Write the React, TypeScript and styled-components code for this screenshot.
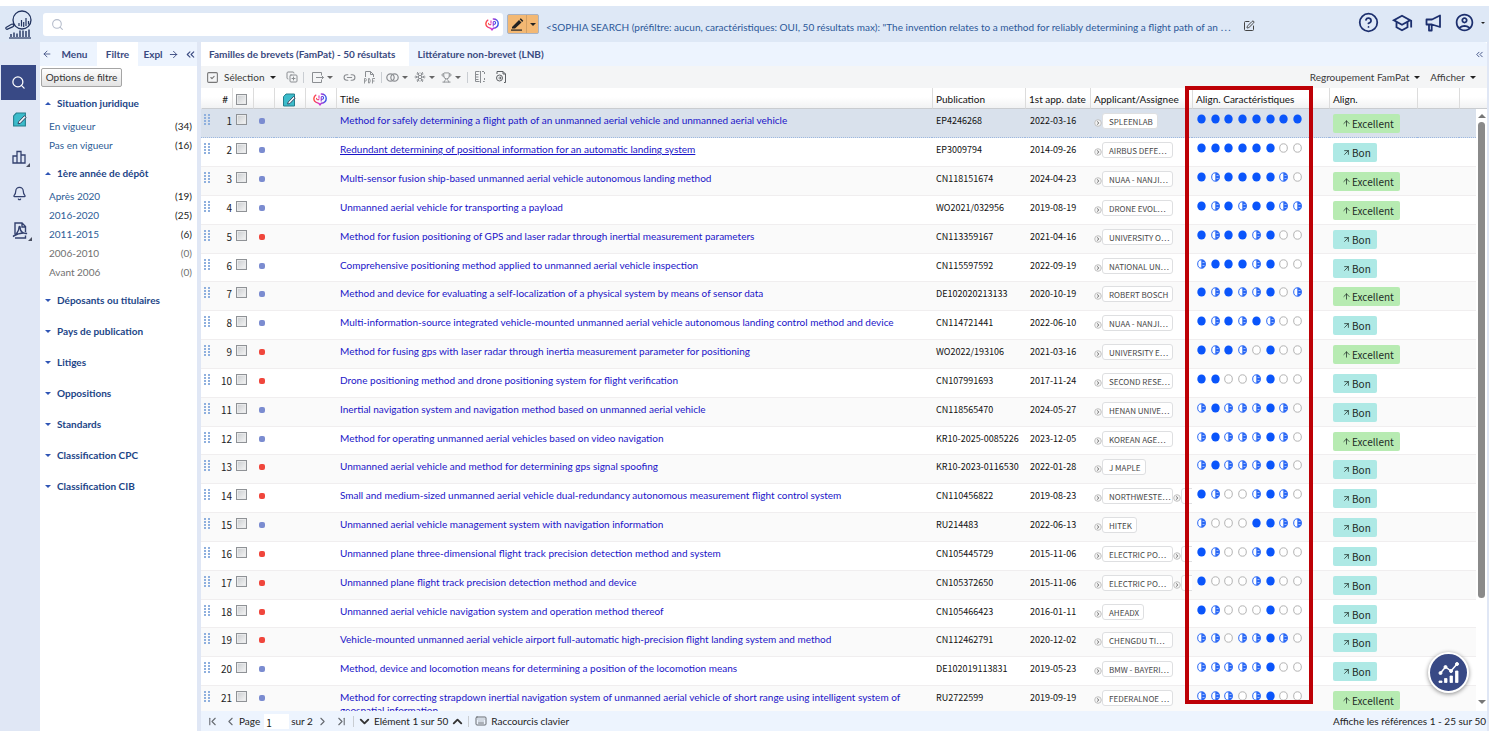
import React from 'react';
import styled, { createGlobalStyle, css } from 'styled-components';
import {
  Search, ArrowLeft, ArrowRight, ArrowUp, ArrowUpRight, ChevronsLeft, Bell, Link2, Trophy, Snowflake,
  SquareCheck, CopyPlus, ChevronLeft, ChevronRight, ChevronFirst, ChevronLast, ChevronDown, ChevronUp,
  Keyboard, SquarePen, CircleHelp,
} from 'lucide-react';
import { MdOutlineSchool, MdOutlineAccountCircle } from 'react-icons/md';

const ui = 'Lato, "Noto Sans CJK SC", sans-serif';
const cjk = '"Noto Sans CJK SC", sans-serif';

const GlobalStyle = createGlobalStyle`
  * { box-sizing: border-box; }
  body { margin: 0; background: #fff; overflow: hidden; font-family: ${ui}; font-size: 10px; line-height: 13px; color: #222; }
  button, input { font: inherit; color: inherit; }
  button { border: 0; padding: 0; background: none; cursor: pointer; }
  a { text-decoration: none; }
  svg { display: block; flex: none; }
`;

const Shell = styled.div`
  height: 100vh;
  padding: 6px 3px 4px 0;
  display: flex;
  flex-direction: column;
`;

/* ---------- top bar ---------- */

const TopBar = styled.header`
  flex: none;
  height: 36px;
  display: flex;
  align-items: center;
  background: #dee8f6;
  padding-right: 4px;
`;
const LogoBox = styled.div`
  width: 43px;
  padding-left: 5px;
`;
const SearchBox = styled.label`
  width: 460px;
  height: 23px;
  background: #fff;
  border-radius: 3px;
  display: flex;
  align-items: center;
  gap: 6px;
  padding: 0 4px 0 8px;
  color: #b5bccb;
`;
const SearchInput = styled.input`
  flex: 1;
  border: 0;
  outline: 0;
  background: none;
`;
const EditGroup = styled.div`
  margin-left: 4px;
  display: flex;
  width: 32px;
  height: 20px;
  border: 1px solid #a9b3c4;
  border-radius: 2px;
  background: #f3b873;
`;
const EditPart = styled.button<{ $w: number; $line?: boolean }>`
  width: ${p => p.$w}px;
  display: flex;
  align-items: center;
  justify-content: center;
  color: #222;
  ${p => p.$line && css`border-left: 1px solid #d3a064;`}
`;
const Query = styled.span`
  margin: 6px 12px 0 7px;
  color: #2c5899;
  line-height: 14px;
  white-space: nowrap;
  overflow: hidden;
  text-overflow: ellipsis;
`;
const IconButton = styled.button<{ $mt?: number }>`
  margin-top: ${p => p.$mt || 0}px;
  display: flex;
  align-items: center;
  gap: 6px;
  color: #444;
`;
const Account = styled.div`
  margin-left: auto;
  display: flex;
  align-items: center;
  gap: 12px;
  padding-bottom: 3px;
  button { color: #1c2f6e; }
`;

/* ---------- frame ---------- */

const Body = styled.div`
  flex: 1;
  min-height: 0;
  display: grid;
  grid-template-columns: 40px 157px minmax(0, 1fr);
  background: #e0e7f5;
  padding-right: 2px;
`;
const Rail = styled.nav`
  padding-top: 23px;
  display: flex;
  flex-direction: column;
`;
const RailItem = styled.button<{ $active?: boolean }>`
  height: 37px;
  width: 39px;
  padding: 0 0 0 12px;
  display: flex;
  align-items: center;
  color: #33416f;
  ${p => p.$active && css`
    height: 35px;
    width: 35px;
    margin-left: 1px;
    padding-left: 10px;
    margin-bottom: 1px;
    background: #384985;
    color: #fff;
  `}
`;
const Corner = styled.span`
  align-self: flex-end;
  margin: 0 0 8px 0;
  border-left: 4px solid transparent;
  border-bottom: 4px solid #4a4f60;
`;

const Side = styled.aside`
  background: #fff;
  min-width: 0;
  border-radius: 3px 3px 0 0;
`;
const SideTabs = styled.div`
  height: 24px;
  display: flex;
  align-items: center;
  background: #edf4fe;
  color: #3a4a80;
  padding-left: 2px;
  button { color: #3a4a80; }
`;
const SideTab = styled.button<{ $w: number; $active?: boolean }>`
  width: ${p => p.$w}px;
  height: 100%;
  font-weight: 700;
  overflow: hidden;
  white-space: nowrap;
  background: ${p => (p.$active ? '#fff' : 'none')};
`;
const FilterOptions = styled.button`
  margin: 2px 0 4px 1px;
  height: 19px;
  width: 81px;
  border: 1px solid #a5a5a5;
  border-radius: 2px;
  background: linear-gradient(#fefefe, #e3e3e3);
  color: #333;
`;
const Section = styled.section`
  margin-bottom: 6px;
`;
const SectionHead = styled.button`
  height: 25px;
  width: 100%;
  display: flex;
  align-items: center;
  gap: 6px;
  padding-left: 5px;
  font-weight: 700;
  color: #1c4587;
`;
const Facets = styled.ul`
  list-style: none;
  margin: 0;
  padding: 1px 5px 0 9px;
`;
const Facet = styled.li<{ $muted: boolean }>`
  height: 19px;
  display: flex;
  align-items: center;
  justify-content: space-between;
  color: ${p => (p.$muted ? '#707070' : '#222')};
  a { color: ${p => (p.$muted ? '#707070' : '#2c5c96')}; }
`;
const Triangle = styled.span<{ $up?: boolean; $color?: string; $size?: number }>`
  flex: none;
  width: 0;
  height: 0;
  border: ${p => p.$size || 3}px solid transparent;
  ${p => p.$up
    ? css`border-top: 0; border-bottom-color: ${p.$color || '#222'};`
    : css`border-bottom: 0; border-top-color: ${p.$color || '#222'};`}
`;

/* ---------- results ---------- */

const Main = styled.main`
  position: relative;
  margin-left: 4px;
  min-width: 0;
  min-height: 0;
  display: flex;
  flex-direction: column;
  background: #fff;
`;
const MainTabs = styled.div`
  flex: none;
  height: 24px;
  display: flex;
  align-items: center;
  background: #edf4fe;
  border-radius: 3px 3px 0 0;
  padding-right: 2px;
`;
const MainTab = styled.button<{ $active?: boolean }>`
  height: 100%;
  padding: 0 14px 0 8px;
  font-weight: 700;
  color: #3a4a80;
  background: ${p => (p.$active ? '#fff' : 'none')};
`;
const Push = styled.button`
  margin-left: auto;
  color: #3a4a80;
`;
const Toolbar = styled.div`
  flex: none;
  height: 22px;
  display: flex;
  align-items: center;
  background: #f4f5f6;
  padding: 0 11px 0 5px;
  color: #8b8e92;
`;
const Tool = styled.button<{ $w: number }>`
  width: ${p => p.$w}px;
  height: 18px;
  display: flex;
  align-items: center;
  justify-content: center;
  gap: 3px;
  color: #8b8e92;
`;
const TextTool = styled.button<{ $gap?: number }>`
  display: flex;
  align-items: center;
  gap: 5px;
  color: #3a3a3a;
  margin-right: ${p => p.$gap || 0}px;
`;
const Sep = styled.span`
  width: 1px;
  height: 11px;
  margin: 0 2px;
  background: #c9cdd2;
`;
const Spacer = styled.span`
  flex: 1;
`;

const Results = styled.div`
  flex: 1;
  min-height: 0;
  display: flex;
`;
const Clip = styled.div`
  flex: 1;
  min-width: 0;
  overflow: hidden;
`;
const headFill = css`background: linear-gradient(#fff 45%, #f1f2f3); border-bottom: 1px solid #c9ccd0;`;
const Table = styled.table`
  width: 100%;
  table-layout: fixed;
  border-collapse: separate;
  border-spacing: 0;
`;
const Th = styled.th<{ $line?: boolean; $pl?: number }>`
  height: 21px;
  padding: 3px 0 0 ${p => p.$pl ?? 3}px;
  font-weight: 400;
  text-align: left;
  white-space: nowrap;
  color: #111;
  ${headFill}
  border-left: 1px solid ${p => (p.$line ? '#dcdcdc' : 'transparent')};
`;
const NumTh = styled(Th)`
  padding-right: 4px;
  text-align: right;
`;
const Row = styled.tr<{ $selected: boolean }>`
  height: 29px;
  background: #fff;
  &:nth-child(odd) { background: #fafafa; }
  &:nth-child(6n) { height: 28px; }
  td { border-bottom: 1px solid #f0eeef; }
  ${p => p.$selected && css`
    &&:nth-child(odd) { background: #d9e1ec; }
    && td { border-bottom: 1px dotted #9db8e0; }
  `}
`;
const Td = styled.td<{ $pl?: number }>`
  padding: 5px 0 0 ${p => p.$pl ?? 4}px;
  vertical-align: top;
  overflow: hidden;
`;
const RaisedTd = styled(Td)`
  padding-top: 4px;
`;
const CodeTd = styled(Td)`
  font-family: ${cjk};
  font-size: 9px;
  white-space: nowrap;
  color: #111;
`;
const NumCell = styled.div`
  display: flex;
  justify-content: space-between;
  font-family: ${cjk};
  height: 13px;
`;
const TitleLink = styled.a<{ $under: boolean }>`
  color: #1a14c8;
  text-decoration: ${p => (p.$under ? 'underline' : 'none')};
`;
const Tick = styled.input`
  appearance: none;
  display: block;
  width: 11px;
  height: 11px;
  margin: 0;
  border: 1px solid #8f9296;
  background: linear-gradient(135deg, #c9cccf, #f6f6f6);
  box-shadow: inset 0 0 0 1px #e9eaeb;
`;
const Status = styled.span<{ $dead: boolean }>`
  display: block;
  width: 6px;
  height: 6px;
  margin: 4px 0 0 2px;
  border-radius: 2px;
  background: ${p => (p.$dead ? '#f0463c' : '#7b8cd0')};
`;
const Chips = styled.div`
  display: flex;
  align-items: center;
`;
const Chip = styled.span<{ $full: boolean }>`
  flex: none;
  height: 16px;
  width: ${p => (p.$full ? '71px' : 'auto')};
  padding: 0 4px 0 6px;
  border: 1px solid #dedfe1;
  border-radius: 3px;
  background: #fff;
  color: #484848;
  font-family: ${cjk};
  font-size: 8px;
  line-height: 15px;
  white-space: nowrap;
  overflow: hidden;
`;
const Dots = styled.div`
  display: flex;
  justify-content: space-between;
  width: 105px;
`;
const Badge = styled.span<{ $top: boolean }>`
  display: flex;
  width: fit-content;
  align-items: center;
  gap: 1px;
  height: 19px;
  padding: 0 6px 0 9px;
  border-radius: 2px;
  background: ${p => (p.$top ? '#b7ebb2' : '#aee9e5')};
  font-family: ${cjk};
  color: #1d2b26;
`;

const ScrollRail = styled.div`
  flex: none;
  width: 11px;
  display: flex;
  flex-direction: column;
  align-items: center;
`;
const RailHead = styled.div`
  align-self: stretch;
  height: 21px;
  margin-bottom: 5px;
  ${headFill}
`;
const Track = styled.div`
  flex: 1;
  margin: 4px 0;
`;
const Thumb = styled.div`
  width: 7px;
  height: 83%;
  border-radius: 4px;
  background: #8a8a8a;
`;
const RailFoot = styled.div`
  height: 7px;
`;

const Footer = styled.footer`
  flex: none;
  height: 20px;
  display: flex;
  align-items: center;
  background: #edf4fe;
  padding: 0 1px 0 2px;
  color: #222;
  white-space: nowrap;
`;
const PageLabel = styled.label`
  display: flex;
  align-items: center;
  gap: 4px;
`;
const PageInput = styled.input`
  width: 25px;
  height: 15px;
  margin-right: 2px;
  padding: 2px 0 0 2px;
  border: 0;
  background: #fff;
  font-family: ${cjk};
`;
const FootButton = styled(Tool)`
  color: #666a70;
`;

const Highlight = styled.div`
  position: absolute;
  top: 44px;
  right: 174px;
  bottom: 27px;
  width: 128px;
  border: 4px solid #bd0006;
  pointer-events: none;
`;
const Fab = styled.button`
  position: absolute;
  right: 18px;
  bottom: 38px;
  width: 41px;
  height: 41px;
  border: 2px solid #fff;
  border-radius: 50%;
  background: #384985;
  box-shadow: 0 1px 4px rgba(0, 0, 0, 0.45);
  display: flex;
  align-items: center;
  justify-content: center;
`;

/* ---------- drawings ---------- */

const Logo = () => (
  <svg width="29" height="29" viewBox="0 0 29 29" fill="none" stroke="#22335f">
    <circle cx="17" cy="10" r="9" strokeWidth="1.3" />
    <path d="M9.500 15L8 16M1 17.500L6.500 14.200Q8.500 13.600 9 15Q9 16.200 7.600 16.900L2 19.400Q.4 19.200 1 17.500Z" strokeWidth="1.200" />
    <path d="M14 13v3M16.500 10v6.500M18.700 12v5M21 8v8M23.500 11v3.500" strokeWidth="1.200" />
    <path d="M6 24v3M9 22.500v4.500M12 23.500v3.500M15 20.500v6.500M18 20.500v6.500M21 21v6M24 19.500v7.500" strokeWidth="1.400" />
    <path d="M4 28h22" strokeWidth="1.200" />
  </svg>
);
const Sophia = ({ id }: { id: string }) => (
  <svg width="14" height="13" viewBox="0 0 14 13" fill="none">
    <defs>
      <linearGradient id={id} x1="0" y1="0" x2="1" y2="0">
        <stop offset="0" stopColor="#ff4a3c" />
        <stop offset="0.45" stopColor="#d52ad0" />
        <stop offset="1" stopColor="#2f55e8" />
      </linearGradient>
    </defs>
    <g stroke={`url(#${id})`} strokeLinecap="round">
      <path strokeWidth="1.400" d="M2.800 2.200C.6 3.500.4 6.500 1.700 8.200C2.700 9.600 4.500 9.900 5.800 10.300L7 11.800L8.200 10.300C11.200 9.900 13.200 8 13.200 5.400C13.200 2.900 11.200 1 8.300 1" />
      <path strokeWidth="1.100" d="M8.200 8V4.600C8.200 3 10.600 3 10.600 4.800C10.600 6.200 9.300 6.500 8.200 6.200M6 2.800v1.700M3.500 5.200C3.700 7.200 5.700 7.300 6 5.900" />
    </g>
  </svg>
);
const Note = ({ size }: { size: number }) => (
  <svg width={size} height={size} viewBox="0 0 14 14">
    <path d="M4 1h8.500v12H1.500V3.700z" fill="#3cbccb" stroke="#247e8c" strokeWidth="1" />
    <path d="M6.200 9L11.500 3.500L13.200 5L7.800 10.600L5.600 11z" fill="#f3f6f8" stroke="#33415f" strokeWidth="0.900" />
  </svg>
);
const Megaphone = () => (
  <svg width="17" height="18" viewBox="0 0 17 18" fill="none" stroke="#1c2f6e" strokeWidth="1.800" strokeLinejoin="round">
    <path d="M1.500 5.500H7L15 1.500V13L7 10.500H1.500z M4 10.500V16.500H6.700V10.500" />
  </svg>
);
const BarBoxes = () => (
  <svg width="14" height="14" viewBox="0 0 14 14" fill="none" stroke="#33416f" strokeWidth="1.300">
    <path d="M1 6h4v7H1zM5 1.500h4V13H5zM9 5h4v8H9z" />
  </svg>
);
const PdfDoc = () => (
  <svg width="16" height="17" viewBox="0 0 16 17" fill="none" stroke="#33416f" strokeWidth="1.400">
    <path d="M3 12V1h7l3.500 3.500V10M10 1v4h3.500" />
    <path d="M1 14.500C4 13 7 9 7 5.500C7 4 8.500 4 8.200 6C8 9 11 12 15 11.500C11 10.500 5 12 1 14.500zM3 16h10.500v-2.500" />
  </svg>
);
const Pencil = () => (
  <svg width="13" height="13" viewBox="0 0 13 13" fill="#222">
    <path d="M1 9L8 2l2.500 2.500L4 10.500H1zM8.700 1.300l1.100-1.100L12.300 2.700l-1.100 1.200z" />
    <path d="M0 11.500h11v1.200H0z" />
  </svg>
);
const ExportIcon = () => (
  <svg width="12" height="11" viewBox="0 0 12 11" fill="none" stroke="#8b8e92">
    <path d="M9.500 3V.5h-9v10h9V8M4 5.500h7.500M9.500 3.500l2 2l-2 2" />
  </svg>
);
const PdfTool = () => (
  <svg width="13" height="13" viewBox="0 0 13 13" fill="none" stroke="#8b8e92">
    <path d="M2.500 6V.5h5l3 3V6M7.500.5v3h3" />
    <path d="M1.500 12.500v-5h1.300q1.200 1.300 0 2.600H1.500M5.500 7.500v4.500h1q1.500-2 0-4.500zM9.500 12.500v-5H12M9.500 10H11.500" strokeWidth="0.900" />
  </svg>
);
const Rings = () => (
  <svg width="13" height="9" viewBox="0 0 13 9" fill="none" stroke="#8b8e92" strokeWidth="1.200">
    <circle cx="4.500" cy="4.500" r="3.700" /><circle cx="8.500" cy="4.500" r="3.700" />
  </svg>
);
const Compare = () => (
  <svg width="12" height="12" viewBox="0 0 12 12" fill="none" stroke="#8b8e92">
    <path d="M5.500.5h-4v10h4M1.500 3.500h3M1.500 6h3M1.500 8.500h3M6.500 0v12" />
    <path d="M8 .5h2.500v3M10.500 7v3.500H8" strokeDasharray="2 1" />
  </svg>
);
const DocSync = () => (
  <svg width="12" height="12" viewBox="0 0 12 12" fill="none" stroke="#5d6064">
    <path d="M2 3V.5h6L10.500 3v8.500H9M8 .5V3h2.500" />
    <circle cx="4.500" cy="7" r="3" /><path d="M3.500 7h2.500M5 5.500L6 7L5 8.500" />
  </svg>
);
const Grip = () => (
  <svg width="7" height="12" viewBox="0 0 7 12" fill="#8fb0de">
    {[0, 3, 6, 9].map(y => <React.Fragment key={y}><rect x="0" y={y} width="2" height="2" /><rect x="4" y={y} width="2" height="2" /></React.Fragment>)}
  </svg>
);
const Expand = () => (
  <svg width="8" height="14" viewBox="0 0 8 14" fill="none" stroke="#a0a0a0">
    <circle cx="4" cy="9" r="3.300" fill="#f3f3f3" stroke="#c2c2c2" /><path d="M3.200 7.500L4.800 9L3.200 10.500" stroke="#666" />
  </svg>
);
const Dot = ({ kind }: { kind: string }) => (
  <svg width="9" height="10" viewBox="0 0 9 10">
    {kind === 'f' && <ellipse cx="4.500" cy="5" rx="4.200" ry="4.600" fill="#0a55fb" />}
    {kind === 'e' && <ellipse cx="4.500" cy="5" rx="3.800" ry="4.200" fill="#fff" stroke="#b3b3b3" />}
    {kind === 'h' && <>
      <ellipse cx="4.500" cy="5" rx="3.800" ry="4.200" fill="#fff" stroke="#2a68f5" />
      <path d="M4.300 .6Q8.600 1 8.600 5T4.300 9.400z" fill="#2a68f5" />
      <path d="M5.500 3.500H7.500M5.500 6.500H7.500" stroke="#a9c4ff" strokeWidth="0.900" />
    </>}
  </svg>
);
const FabChart = () => (
  <svg width="22" height="23" viewBox="0 0 22 23" fill="#fff" stroke="#fff">
    <path d="M2.500 12L7.500 6L13 10L19 3" fill="none" strokeWidth="1.500" />
    <circle cx="2.500" cy="12" r="1.500" /><circle cx="7.500" cy="6" r="1.500" /><circle cx="13" cy="10" r="1.500" /><circle cx="19" cy="3" r="1.500" />
    <path d="M1 20h3v1.500H1zM6.500 17.500h2.500v4H6.500zM12 15h2.500v6.500H12zM17.500 10h2.500v11.500h-2.500z" strokeWidth="0.800" />
  </svg>
);

/* ---------- data ---------- */

const sections: { name: string; items?: [string, number][] }[] = [
  { name: 'Situation juridique', items: [['En vigueur', 34], ['Pas en vigueur', 16]] },
  { name: '1ère année de dépôt', items: [['Après 2020', 19], ['2016-2020', 25], ['2011-2015', 6], ['2006-2010', 0], ['Avant 2006', 0]] },
  { name: 'Déposants ou titulaires' },
  { name: 'Pays de publication' },
  { name: 'Litiges' },
  { name: 'Oppositions' },
  { name: 'Standards' },
  { name: 'Classification CPC' },
  { name: 'Classification CIB' },
];

// status: b = in force, r = lapsed; dots: f = full, h = half, e = empty; grade: E = Excellent, B = Bon
const rows: [string, string, string, string, string, string, string][] = [
  ['Method for safely determining a flight path of an unmanned aerial vehicle and unmanned aerial vehicle', 'EP4246268', '2022-03-16', 'SPLEENLAB', 'b', 'ffffffff', 'E'],
  ['Redundant determining of positional information for an automatic landing system', 'EP3009794', '2014-09-26', 'AIRBUS DEFE⋯', 'b', 'ffffffee', 'B'],
  ['Multi-sensor fusion ship-based unmanned aerial vehicle autonomous landing method', 'CN118151674', '2024-04-23', 'NUAA - NANJI⋯', 'b', 'fhffffhe', 'E'],
  ['Unmanned aerial vehicle for transporting a payload', 'WO2021/032956', '2019-08-19', 'DRONE EVOL⋯', 'b', 'fhfhffhh', 'E'],
  ['Method for fusion positioning of GPS and laser radar through inertial measurement parameters', 'CN113359167', '2021-04-16', 'UNIVERSITY O⋯', 'r', 'fhffhfee', 'B'],
  ['Comprehensive positioning method applied to unmanned aerial vehicle inspection', 'CN115597592', '2022-09-19', 'NATIONAL UN⋯', 'b', 'hfffhfee', 'B'],
  ['Method and device for evaluating a self-localization of a physical system by means of sensor data', 'DE102020213133', '2020-10-19', 'ROBERT BOSCH', 'b', 'fhfhhfeh', 'E'],
  ['Multi-information-source integrated vehicle-mounted unmanned aerial vehicle autonomous landing control method and device', 'CN114721441', '2022-06-10', 'NUAA - NANJI⋯', 'b', 'fhfhfhee', 'B'],
  ['Method for fusing gps with laser radar through inertia measurement parameter for positioning', 'WO2022/193106', '2021-03-16', 'UNIVERSITY E⋯', 'r', 'fhfhefee', 'E'],
  ['Drone positioning method and drone positioning system for flight verification', 'CN107991693', '2017-11-24', 'SECOND RESE⋯', 'r', 'ffeehfee', 'B'],
  ['Inertial navigation system and navigation method based on unmanned aerial vehicle', 'CN118565470', '2024-05-27', 'HENAN UNIVE⋯', 'b', 'hfhhhfhe', 'B'],
  ['Method for operating unmanned aerial vehicles based on video navigation', 'KR10-2025-0085226', '2023-12-05', 'KOREAN AGE⋯', 'b', 'hfhhhfhe', 'E'],
  ['Unmanned aerial vehicle and method for determining gps signal spoofing', 'KR10-2023-0116530', '2022-01-28', 'J MAPLE', 'r', 'hfhhhfhe', 'B'],
  ['Small and medium-sized unmanned aerial vehicle dual-redundancy autonomous measurement flight control system', 'CN110456822', '2019-08-23', 'NORTHWESTE⋯+', 'r', 'fheehfhe', 'B'],
  ['Unmanned aerial vehicle management system with navigation information', 'RU214483', '2022-06-13', 'HITEK', 'b', 'heeeffhh', 'B'],
  ['Unmanned plane three-dimensional flight track precision detection method and system', 'CN105445729', '2015-11-06', 'ELECTRIC PO⋯+', 'r', 'fheehfee', 'B'],
  ['Unmanned plane flight track precision detection method and device', 'CN105372650', '2015-11-06', 'ELECTRIC PO⋯+', 'r', 'feeehfee', 'B'],
  ['Unmanned aerial vehicle navigation system and operation method thereof', 'CN105466423', '2016-01-11', 'AHEADX', 'r', 'fheeefee', 'B'],
  ['Vehicle-mounted unmanned aerial vehicle airport full-automatic high-precision flight landing system and method', 'CN112462791', '2020-12-02', 'CHENGDU TI⋯', 'r', 'hhehhfhe', 'B'],
  ['Method, device and locomotion means for determining a position of the locomotion means', 'DE102019113831', '2019-05-23', 'BMW - BAYERI⋯', 'b', 'hhhhhfee', 'B'],
  ['Method for correcting strapdown inertial navigation system of unmanned aerial vehicle of short range using intelligent system of geospatial information', 'RU2722599', '2019-09-19', 'FEDERALNOE ⋯', 'b', 'hhhehfee', 'E'],
];

const ResultRow = ({ index }: { index: number }) => {
  const [title, pub, date, owner, status, dots, grade] = rows[index];
  const more = owner.endsWith('+');
  const name = owner.replace('+', '');
  return (
    <Row $selected={index === 0}>
      <Td $pl={3}><NumCell><Grip /><span>{index + 1}</span></NumCell></Td>
      <Td><Tick type="checkbox" aria-label={`Sélectionner ${pub}`} /></Td>
      <Td><Status $dead={status === 'r'} /></Td>
      <Td /><Td />
      <Td><TitleLink href="#" $under={index === 1}>{title}</TitleLink></Td>
      <CodeTd>{pub}</CodeTd>
      <CodeTd $pl={5}>{date}</CodeTd>
      <RaisedTd>
        <Chips>
          <Expand /><Chip $full={name.endsWith('⋯')}>{name}</Chip>
          {more && <><Expand /><Chip $full /></>}
        </Chips>
      </RaisedTd>
      <Td $pl={5}><Dots>{dots.split('').map((k, i) => <Dot key={i} kind={k} />)}</Dots></Td>
      <Td>
        <Badge $top={grade === 'E'}>
          {grade === 'E' ? <><ArrowUp size={9} strokeWidth={2} />Excellent</> : <><ArrowUpRight size={9} strokeWidth={2} />Bon</>}
        </Badge>
      </Td>
      <Td /><Td />
    </Row>
  );
};

const columns = [31, 21, 21, 31, 31, 0, 93, 65, 102, 137, 88, 42, 17];

export default function App() {
  return (
    <Shell>
      <GlobalStyle />
      <TopBar>
        <LogoBox><Logo /></LogoBox>
        <SearchBox>
          <Search size={13} />
          <SearchInput type="search" aria-label="Recherche" />
          <Sophia id="sophia-search" />
        </SearchBox>
        <EditGroup>
          <EditPart $w={18} aria-label="Modifier"><Pencil /></EditPart>
          <EditPart $w={12} $line aria-label="Options"><Triangle /></EditPart>
        </EditGroup>
        <Query>{'<SOPHIA SEARCH (préfiltre: aucun, caractéristiques: OUI, 50 résultats max): "The invention relates to a method for reliably determining a flight path of an ⋯'}</Query>
        <IconButton $mt={3} aria-label="Éditer"><SquarePen size={12} strokeWidth={2} /></IconButton>
        <Account>
          <IconButton aria-label="Aide"><CircleHelp size={21} strokeWidth={2} /></IconButton>
          <IconButton aria-label="Formation"><MdOutlineSchool size={22} /></IconButton>
          <IconButton aria-label="Annonces"><Megaphone /></IconButton>
          <IconButton aria-label="Compte"><MdOutlineAccountCircle size={21} /><Triangle $size={2} /></IconButton>
        </Account>
      </TopBar>

      <Body>
        <Rail>
          <RailItem $active aria-label="Recherche"><Search size={15} strokeWidth={2} /></RailItem>
          <RailItem aria-label="Notes"><Note size={15} /></RailItem>
          <RailItem aria-label="Analyse"><BarBoxes /><Corner /></RailItem>
          <RailItem aria-label="Alertes"><Bell size={15} strokeWidth={2} /></RailItem>
          <RailItem aria-label="Documents"><PdfDoc /><Corner /></RailItem>
        </Rail>

        <Side>
          <SideTabs>
            <IconButton aria-label="Précédent"><ArrowLeft size={10} /></IconButton>
            <SideTab $w={45}>Menu</SideTab>
            <SideTab $w={41} $active>Filtre</SideTab>
            <SideTab $w={30}>Expl</SideTab>
            <IconButton aria-label="Suivant"><ArrowRight size={11} /></IconButton>
            <Push aria-label="Réduire"><ChevronsLeft size={13} /></Push>
          </SideTabs>
          <FilterOptions>Options de filtre</FilterOptions>
          {sections.map(s => (
            <Section key={s.name}>
              <SectionHead><Triangle $up={!!s.items} $color="#2f55b5" />{s.name}</SectionHead>
              {s.items && (
                <Facets>
                  {s.items.map(([label, n]) => (
                    <Facet key={label} $muted={n === 0}><a href="#">{label}</a><span>({n})</span></Facet>
                  ))}
                </Facets>
              )}
            </Section>
          ))}
        </Side>

        <Main>
          <MainTabs>
            <MainTab $active>Familles de brevets (FamPat) - 50 résultats</MainTab>
            <MainTab>Littérature non-brevet (LNB)</MainTab>
            <Push aria-label="Réduire"><ChevronsLeft size={11} /></Push>
          </MainTabs>
          <Toolbar>
            <TextTool $gap={7}><SquareCheck size={13} color="#777" />Sélection<Triangle /></TextTool>
            <Tool $w={18} aria-label="Ajouter"><CopyPlus size={12} /></Tool>
            <Sep />
            <Tool $w={33} aria-label="Exporter"><ExportIcon /><Triangle $color="#666" /></Tool>
            <Tool $w={22} aria-label="Lien"><Link2 size={13} /></Tool>
            <Tool $w={18} aria-label="PDF"><PdfTool /></Tool>
            <Sep />
            <Tool $w={27} aria-label="Similaires"><Rings /><Triangle $color="#666" /></Tool>
            <Tool $w={27} aria-label="Réseau"><Snowflake size={12} /><Triangle $color="#666" /></Tool>
            <Tool $w={27} aria-label="Classement"><Trophy size={11} /><Triangle $color="#666" /></Tool>
            <Sep />
            <Tool $w={21} aria-label="Comparer"><Compare /></Tool>
            <Tool $w={20} aria-label="Synchroniser"><DocSync /></Tool>
            <Spacer />
            <TextTool $gap={10}>Regroupement FamPat<Triangle /></TextTool>
            <TextTool>Afficher<Triangle /></TextTool>
          </Toolbar>

          <Results>
            <Clip>
              <Table>
                <colgroup>
                  {columns.map((w, i) => <col key={i} width={w || undefined} />)}
                </colgroup>
                <thead>
                  <tr>
                    <NumTh>#</NumTh>
                    <Th $line><Tick type="checkbox" aria-label="Tout sélectionner" /></Th>
                    <Th $line />
                    <Th $line $pl={7}><Note size={14} /></Th>
                    <Th $line $pl={7}><Sophia id="sophia-head" /></Th>
                    <Th $line>Title</Th>
                    <Th $line>Publication</Th>
                    <Th $line>1st app. date</Th>
                    <Th $line>Applicant/Assignee</Th>
                    <Th $line>Align. Caractéristiques</Th>
                    <Th $line>Align.</Th>
                    <Th $line /><Th $line />
                  </tr>
                </thead>
                <tbody>
                  {rows.map((_, i) => <ResultRow key={i} index={i} />)}
                </tbody>
              </Table>
            </Clip>
            <ScrollRail>
              <RailHead />
              <Triangle $up $color="#777" $size={4} />
              <Track><Thumb /></Track>
              <Triangle $color="#777" $size={4} />
              <RailFoot />
            </ScrollRail>
          </Results>

          <Footer>
            <FootButton $w={18} aria-label="Première page"><ChevronFirst size={13} /></FootButton>
            <FootButton $w={18} aria-label="Page précédente"><ChevronLeft size={13} /></FootButton>
            <PageLabel>Page<PageInput type="text" defaultValue="1" /></PageLabel>
            <span>sur 2</span>
            <FootButton $w={20} aria-label="Page suivante"><ChevronRight size={13} /></FootButton>
            <FootButton $w={18} aria-label="Dernière page"><ChevronLast size={13} /></FootButton>
            <Sep />
            <FootButton $w={18} aria-label="Élément suivant"><ChevronDown size={15} strokeWidth={3} color="#333" /></FootButton>
            <span>Elément 1 sur 50</span>
            <FootButton $w={18} aria-label="Élément précédent"><ChevronUp size={15} strokeWidth={3} color="#333" /></FootButton>
            <Sep />
            <FootButton $w={20} aria-label="Clavier"><Keyboard size={12} /></FootButton>
            <span>Raccourcis clavier</span>
            <Spacer />
            <span>Affiche les références 1 - 25 sur 50</span>
          </Footer>
          <Highlight />
          <Fab aria-label="Analyse graphique"><FabChart /></Fab>
        </Main>
      </Body>
    </Shell>
  );
}
